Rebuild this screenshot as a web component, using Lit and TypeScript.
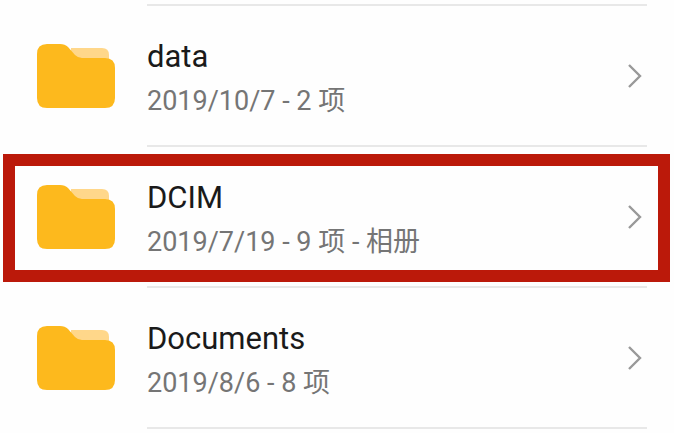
import { LitElement, html, css, svg } from "lit";
import { customElement, property } from "lit/decorators.js";

interface Entry {
  name: string;
  detail: string;
  marked?: boolean;
}

const entries: Entry[] = [
  { name: "data", detail: "2019/10/7 - 2 项" },
  { name: "DCIM", detail: "2019/7/19 - 9 项 - 相册", marked: true },
  { name: "Documents", detail: "2019/8/6 - 8 项" },
];

const folderShapes = svg`
  <path d="M34 4H65Q72 4 72 11V24H34Z" fill="#ffd78a"/>
  <path d="M10 0H23Q28 0 31 3L38 11Q41 14 45 14H68Q78 14 78 24V54Q78 64 68 64H10Q0 64 0 54V10Q0 0 10 0Z" fill="#fdb91d"/>
`;

@customElement("folder-row")
export class FolderRow extends LitElement {
  @property() name = "";
  @property() detail = "";
  @property({ type: Boolean }) marked = false;

  static styles = css`
    :host {
      display: block;
      position: relative;
    }
    .row {
      display: flex;
      align-items: stretch;
      gap: 32px;
      width: 100%;
      padding: 0 27px 0 37px;
      border: 0;
      background: none;
      font: inherit;
      color: inherit;
      text-align: left;
      cursor: pointer;
    }
    .folder {
      flex: none;
      align-self: center;
      width: 78px;
      height: 64px;
      padding-bottom: 2px;
    }
    .body {
      flex: 1;
      min-width: 0;
      display: flex;
      align-items: center;
      padding: 31px 4px 28px 0;
      border-bottom: 2px solid #e8e8e8;
    }
    .text {
      flex: 1;
      min-width: 0;
      display: flex;
      flex-direction: column;
      gap: 8px;
    }
    .name {
      font-size: 31px;
      line-height: 40px;
      color: #1a1a1a;
    }
    .detail {
      font-size: 27px;
      line-height: 32px;
      color: #757575;
    }
    .chevron {
      flex: none;
      width: 16px;
      height: 24px;
      padding-bottom: 2px;
    }
    .mark {
      position: absolute;
      inset: 7px 4px 6px 3px;
      border: 12px solid #bb190a;
      pointer-events: none;
    }
  `;

  render() {
    return html`
      <button class="row" type="button">
        <svg class="folder" viewBox="0 0 78 64" aria-hidden="true">${folderShapes}</svg>
        <span class="body">
          <span class="text">
            <span class="name">${this.name}</span>
            <span class="detail">${this.detail}</span>
          </span>
          <svg class="chevron" viewBox="0 0 16 24" aria-hidden="true">
            <path d="M2 1L13 12L2 23" fill="none" stroke="#999" stroke-width="2.4" />
          </svg>
        </span>
      </button>
      ${this.marked ? html`<div class="mark"></div>` : null}
    `;
  }
}

@customElement("app-root")
export class AppRoot extends LitElement {
  static styles = css`
    :host {
      display: block;
      background: #fefefe;
      font-family: Roboto, "Noto Sans CJK SC", sans-serif;
    }
    .list {
      list-style: none;
      margin: 0;
      padding: 4px 0;
    }
    .list::before {
      content: "";
      display: block;
      height: 2px;
      margin: 0 27px 0 147px;
      background: #e8e8e8;
    }
  `;

  render() {
    return html`
      <ul class="list">
        ${entries.map(
          (e) => html`<li>
            <folder-row .name=${e.name} .detail=${e.detail} .marked=${e.marked ?? false}></folder-row>
          </li>`
        )}
      </ul>
    `;
  }
}
